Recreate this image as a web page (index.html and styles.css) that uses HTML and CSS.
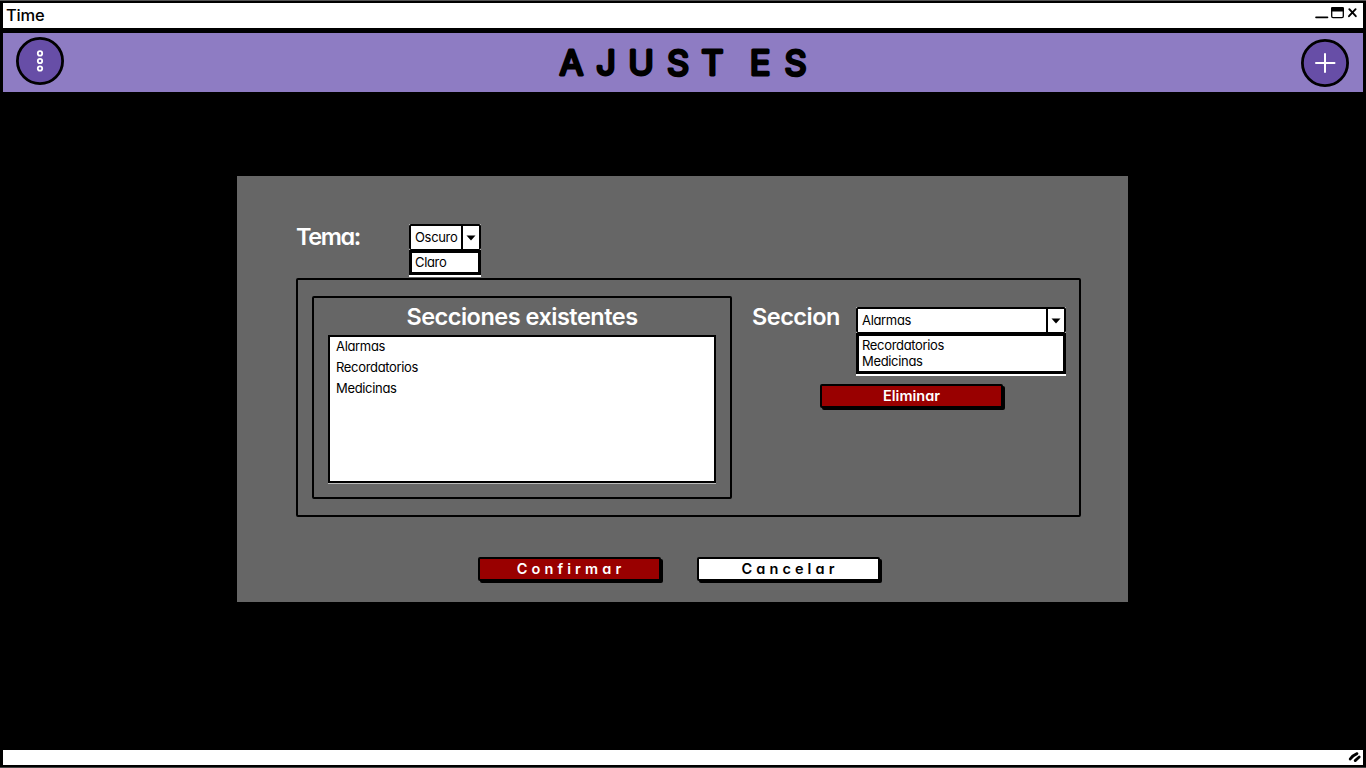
FILE: index.html
```html
<!DOCTYPE html>
<html lang="es">
<head>
<meta charset="utf-8">
<title>Time</title>
<link rel="stylesheet" href="styles.css">
</head>
<body>
<div class="window">
  <header class="titlebar">
    <span class="app-name">Time</span>
    <svg class="controls" width="44" height="14" viewBox="0 0 44 14">
      <path d="M1 12.4H12.5" stroke="#000" stroke-width="1.6" stroke-linecap="round"/>
      <rect x="16.7" y="2.8" width="11.6" height="9.8" rx="1.3" fill="#fff" stroke="#000" stroke-width="1.3"/>
      <path d="M16 6.5V3.2Q16 2 17.3 2H27.5Q29 2 29 3.2V6.5Z"/>
      <path d="M34.3 4.2L40.8 11.2M40.6 4.2L34 11.2" stroke="#000" stroke-width="1.9" stroke-linecap="round"/>
    </svg>
  </header>
  <div class="appbar">
    <svg class="round-btn" width="48" height="48" viewBox="0 0 48 48">
      <circle cx="24" cy="24" r="22.6" fill="#674ea7" stroke="#000" stroke-width="2.8"/>
      <g fill="none" stroke="#fff" stroke-width="1.8"><circle cx="24" cy="16.4" r="2.2"/><circle cx="24" cy="24" r="2.2"/><circle cx="24" cy="31.5" r="2.2"/></g>
    </svg>
    <svg class="title" width="260" height="50" viewBox="0 0 260 50" role="heading" aria-level="1">
      <text y="37.7" x="18.5 53 88 125 159.5 185 207 242.5">AJUST ES</text>
    </svg>
    <svg class="round-btn add" width="48" height="48" viewBox="0 0 48 48">
      <circle cx="24" cy="24" r="22.6" fill="#674ea7" stroke="#000" stroke-width="2.8"/>
      <path d="M24 15V33M15 24H33.5" stroke="#fff" stroke-width="2" stroke-linecap="round"/>
    </svg>
  </div>
  <main class="content">
    <section class="panel">
      <div class="theme-row">
        <span class="label tema">Tema:</span>
        <div class="combo small">
          <div class="combo-head"><span class="combo-value">Oscuro</span><span class="combo-arrow"><svg width="10" height="6" viewBox="0 0 10 6"><path d="M.5 .5H9.5L5 5.5Z"/></svg></span></div>
          <div class="combo-list"><span>Claro</span></div>
        </div>
      </div>
      <div class="sections">
        <div class="existing">
          <h2 class="label existing-title">Secciones existentes</h2>
          <ul class="list">
            <li>Alarmas</li>
            <li>Recordatorios</li>
            <li>Medicinas</li>
          </ul>
        </div>
        <div class="remove">
          <div class="remove-row">
            <span class="label seccion">Seccion</span>
            <div class="combo large">
              <div class="combo-head"><span class="combo-value">Alarmas</span><span class="combo-arrow"><svg width="10" height="6" viewBox="0 0 10 6"><path d="M.5 .5H9.5L5 5.5Z"/></svg></span></div>
              <div class="combo-list"><span>Recordatorios</span><span>Medicinas</span></div>
            </div>
          </div>
          <div class="btn red eliminar"><span>Eliminar</span></div>
        </div>
      </div>
      <div class="actions">
        <div class="btn red confirmar"><span>Confirmar</span></div>
        <div class="btn white cancelar"><span>Cancelar</span></div>
      </div>
    </section>
  </main>
  <footer class="statusbar">
    <svg width="14" height="14" viewBox="0 0 14 14"><path d="M2.2 9Q4.5 5.5 9 3.6M7.2 10.6L11.2 7" fill="none" stroke="#000" stroke-width="2.8" stroke-linecap="round"/></svg>
  </footer>
</div>
</body>
</html>
```
FILE: styles.css
```css
* { box-sizing: border-box; }
html, body { margin: 0; background: #000; }
body {
  font-family: Inter, "Liberation Sans", sans-serif;
  font-feature-settings: "cv11";
  color: #000;
  overflow: hidden;
}
.window {
  width: 1366px;
  height: 768px;
  padding: 2px 3px;
  border-top: 1px solid #555;
  border-bottom: 1px solid #444;
  display: flex;
  flex-direction: column;
}
.titlebar {
  height: 25px;
  background: #fff;
  display: flex;
  justify-content: space-between;
  align-items: flex-start;
  padding: 2px 4px 0 3px;
}
.app-name { font-size: 16.5px; line-height: 20px; font-weight: 500; letter-spacing: -.2px; }
.appbar {
  height: 59px;
  margin-top: 5px;
  background: #8e7cc3;
  display: flex;
  justify-content: space-between;
  padding: 4px 14px 0 13px;
}
.add { margin-top: 2px; }
.title text {
  font-size: 34.5px;
  font-weight: 400;
  text-anchor: middle;
  stroke: #000;
  stroke-width: 2.9px;
  stroke-linejoin: round;
}
.content { flex: 1; padding: 84px 234px 0; }
.panel {
  width: 891px;
  height: 426px;
  background: #666;
  padding: 48px 0 0 59px;
}
.label {
  color: #fff;
  font-size: 23.5px;
  line-height: 28px;
  font-weight: 600;
  letter-spacing: -.5px;
  white-space: nowrap;
}
.theme-row { display: flex; height: 54px; }
.tema { width: 113px; margin-top: -1px; letter-spacing: -1.4px; }
.combo {
  font-size: 13px;
  line-height: 16px;
  letter-spacing: -.33px;
  background: #fff;
  padding-bottom: 2px;
}
.combo-head {
  height: 26px;
  border: 2px solid #000;
  border-bottom-width: 1px;
  border-radius: 2px;
  display: flex;
}
.combo-value { flex: 1; padding: 3px 0 0 4px; }
.combo-arrow {
  width: 18px;
  border-left: 2px solid #000;
  display: flex;
  align-items: center;
  justify-content: center;
}
.combo-list {
  border: 3px solid #000;
  padding: 1px 3px 0;
  display: flex;
  flex-direction: column;
}
.small { width: 72px; height: 53px; }
.small .combo-list { height: 25px; }
.large { width: 210px; height: 69px; }
.large .combo-list { height: 41px; padding-top: 1px; }
.sections {
  width: 785px;
  height: 239px;
  border: 2px solid #000;
  border-radius: 2px;
  display: flex;
  padding: 16px 13px 0 14px;
}
.existing {
  width: 420px;
  height: 203px;
  border: 2px solid #000;
  border-radius: 2px;
  padding: 5px 14px 0;
}
.existing-title { margin: 0; text-align: center; height: 32px; }
.list {
  height: 148px;
  margin: 0;
  padding: 0 5px 0 6px;
  list-style: none;
  font-size: 13px;
  line-height: 21px;
  letter-spacing: -.33px;
  background: #fff;
  border: 2px solid #000;
  box-shadow: 0 1px 0 #bbb;
}
.list li:first-child { margin-top: -1px; }
.remove { padding: 11px 0 0 20px; }
.remove-row { display: flex; height: 77px; }
.seccion { width: 104px; margin-top: -4px; }
.btn {
  width: 183px;
  height: 24px;
  border: 2px solid #000;
  border-radius: 2px;
  box-shadow: 2px 2px 0 #000;
  font-size: 14.5px;
  line-height: 20px;
  font-weight: 600;
  text-align: center;
}
.red { background: #900; color: #fff; }
.white { background: #fff; }
.eliminar { margin-left: 68px; }
.actions { display: flex; gap: 36px; padding: 40px 0 0 182px; }
.confirmar, .cancelar { letter-spacing: 4.1px; padding-left: 3px; }
.statusbar {
  height: 15px;
  background: #fff;
  display: flex;
  justify-content: flex-end;
  align-items: flex-start;
  padding-right: 1px;
}
```
